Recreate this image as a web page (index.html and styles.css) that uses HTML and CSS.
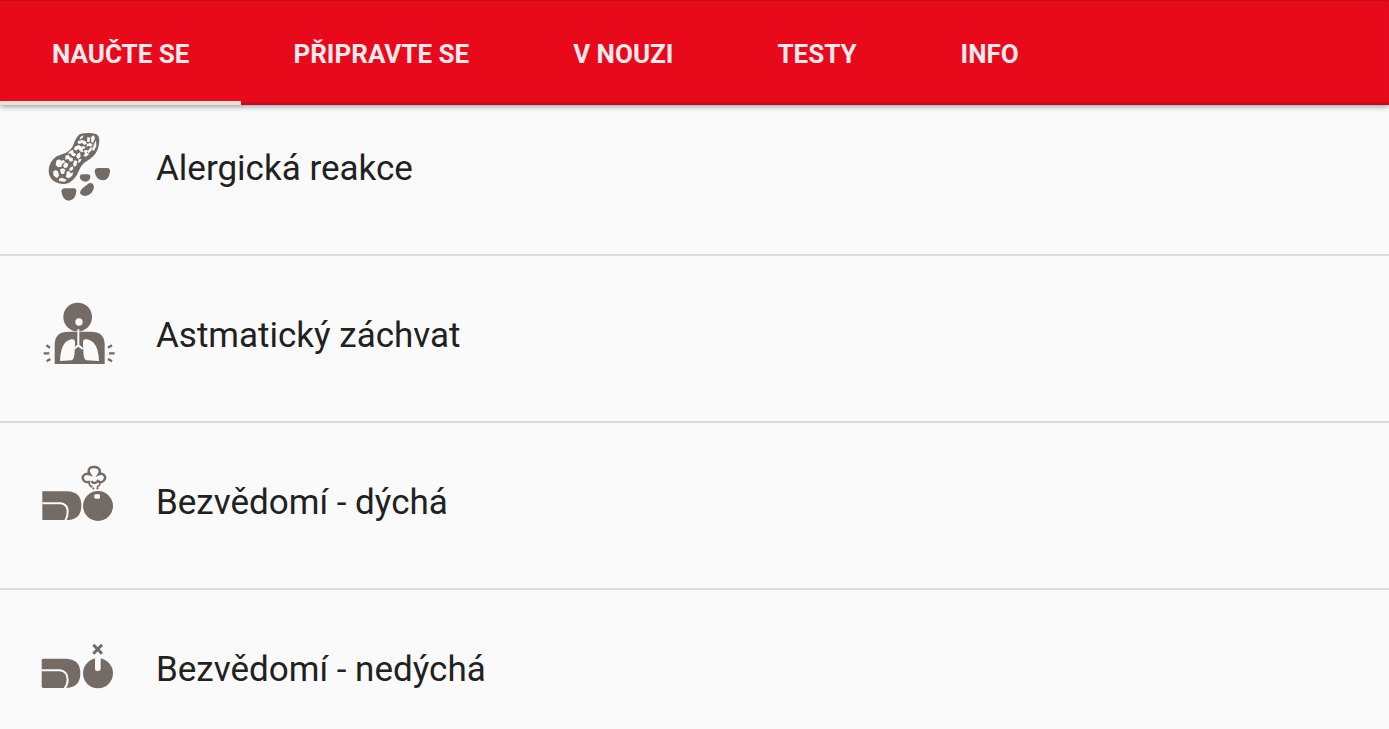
FILE: index.html
```html
<!DOCTYPE html>
<html lang="cs">
<head>
<meta charset="utf-8">
<meta name="viewport" content="width=device-width, initial-scale=1">
<title>První pomoc</title>
<link rel="stylesheet" href="styles.css">
</head>
<body>
<nav class="tabs">
  <a class="tab tab-active" href="#naucte" aria-current="page">NAUČTE SE</a>
  <a class="tab" href="#pripravte">PŘIPRAVTE SE</a>
  <a class="tab" href="#nouze">V NOUZI</a>
  <a class="tab" href="#testy">TESTY</a>
  <a class="tab" href="#info">INFO</a>
</nav>
<main>
  <ul class="topics">
    <li><a class="topic" href="#alergie">
      <svg class="icon" viewBox="24 27 240 240" aria-hidden="true">
        <path class="fill" d="M150 42Q175 36 198 42Q208 46 208 62Q207 90 191 107Q182 116 165 127Q153 136 146 154Q137 177 118 188Q98 197 77 187Q55 176 56 150Q58 124 80 109L108 98Q125 90 131 72Q138 51 150 42Z"/>
        <g class="cut">
          <path d="M151 51l10-5-3 7-9 6zM172 51l9 2-3 14-7-2zM184 50l7-4 4 8-6 15-6-4zM144 63l12-3 10 3 5 8-8 4-6-6-9 3-5-3zM171 72l9-3 8 4-5 8-6-4-8 3zM192 73l6-12 1 17-7 14-6-2zM180 84l8-3-5 12-8 7-3-5zM136 79l11-4 7 5 8-2 5 6-9 4 2 8-8-1-7-8-7 5-7-5zM164 90l10 1-4 7 8 4-10 8-8-3 6-7-5-4zM120 93l9-4 2 9 8 5-5 6-7-1-6-8-8 2zM142 102l8-5 2 13-7 7-7-7z"/>
          <path d="M106 107l10-3 3 7 9 3 1 9-9 2-5-8-9 2zM79 122l8-4 7 4 8-2 3 7-8 5-3 8-9 2-8-6zM106 127l9 5-3 10-8 3-5-8zM133 121l9 2-2 12-7 7-4-9zM146 118l9-1-5 10-6 1zM69 155l8-5 7 4 3 13-6 7-10-7zM90 148l9-3 7 4-4 13-9-1zM110 155l8-3 3 8 8-3-2 10-10 8-9-3zM87 176l9-3 15 7-8 5-16-2zM121 142l7-3 2 8-7 6-6-4z"/>
        </g>
        <path class="fill" d="M149 170Q150 163 158 163H173Q181 163 181 169Q180 185 166 185Q152 184 149 170ZM194 154Q195 144 205 144H232Q241 145 240 155Q237 181 217 181Q197 179 194 154ZM94 212Q96 205 105 205H132Q140 206 139 214Q137 241 116 242Q97 240 94 212ZM150 217Q151 210 159 203L177 190Q187 186 191 196Q194 207 184 219Q171 233 157 226Q149 223 150 217Z"/>
      </svg>
      <span class="label">Alergická reakce</span></a></li>
    <li><a class="topic" href="#astma">
      <svg class="icon" viewBox="24 18 240 240" aria-hidden="true">
        <circle class="fill" cx="143" cy="81" r="43"/>
        <path class="fill" d="M74 222V164Q74 125 116 125H182Q224 125 224 164V222Z"/>
        <circle class="cut" cx="147" cy="96" r="11"/>
        <path class="cut" d="M142 118H148V164L160 175L157 179L145 170L133 179L130 175L142 164ZM129 148Q136 150 135 160L134 182Q134 208 124 211L90 213Q91 175 105 158Q119 145 129 148ZM165 148Q158 150 159 160L160 182Q160 208 170 211L207 213Q206 175 191 158Q176 145 165 148Z"/>
        <path class="mark" d="M49 166L60 173M41 190H58M50 214L61 207M246 166L234 173M237 190H254M246 214L234 207"/>
      </svg>
      <span class="label">Astmatický záchvat</span></a></li>
    <li><a class="topic" href="#bezvedomi-dycha">
      <svg class="icon" viewBox="24 24 240 240" aria-hidden="true">
        <path class="fill" d="M37 109H112Q154 111 154 151Q154 193 114 195H37Z"/>
        <path class="seam" d="M37 145H91Q113 147 113 170Q113 184 106 196"/>
        <circle class="fill" cx="204" cy="153" r="45"/>
        <rect class="cut" x="193" y="118" width="17" height="13" rx="4"/>
        <path class="cloud" d="M180 80C161 86 153 68 162 60C168 54 175 56 180 58C170 43 180 35 193 36C207 35 214 46 206 58C220 52 231 65 222 76C217 83 208 82 203 78C198 86 188 86 184 78"/>
        <path class="puff" d="M177 83Q179 96 188 95M210 83Q209 96 200 95M188 99L192 102M200 102L205 98"/>
      </svg>
      <span class="label">Bezvědomí - dýchá</span></a></li>
    <li><a class="topic" href="#bezvedomi-nedycha">
      <svg class="icon" viewBox="24 0 240 240" aria-hidden="true">
        <path class="fill" d="M40 86H110Q151 88 151 130Q151 172 110 174H40Q35 174 35 169V91Q35 86 40 86Z"/>
        <path class="seam" d="M34 121H89Q113 124 113 149Q113 164 104 175"/>
        <circle class="fill" cx="204" cy="130" r="45"/>
        <path class="cut" d="M195 82H212V117Q212 123 204 123Q195 123 195 117Z"/>
        <path class="cross" d="M190 44L216 71M216 44L190 71"/>
      </svg>
      <span class="label">Bezvědomí - nedýchá</span></a></li>
  </ul>
</main>
</body>
</html>
```
FILE: styles.css
```css
* {
  box-sizing: border-box;
}

body {
  margin: 0;
  height: 100vh;
  overflow: hidden;
  background: #fafafa;
  color: #212121;
  font-family: Roboto, "Noto Sans", sans-serif;
}

a {
  color: inherit;
  text-decoration: none;
}

.tabs {
  position: relative;
  z-index: 1;
  display: flex;
  height: 105px;
  background: #e8091b;
  border-top: 1px solid #cf0a18;
  box-shadow: inset 0 -3px 2px -1px #b80d1c, 0 1px 6px rgba(0, 0, 0, 0.45);
}

.tab {
  display: flex;
  align-items: center;
  padding: 6px 52px 0;
  border-bottom: 4px solid transparent;
  color: #ffe9ec;
  font-size: 26px;
  font-weight: 700;
  white-space: nowrap;
}

.tab-active {
  border-bottom-color: #eedfdf;
}

/* The list is scrolled slightly under the tab bar. */
.topics {
  margin: -16px 0 0;
  padding: 0;
  list-style: none;
}

.topic {
  display: flex;
  align-items: center;
  gap: 38px;
  height: 167px;
  padding: 0 38px 5px;
  border-bottom: 2px solid #dcdcdc;
}

.icon {
  flex: none;
  width: 80px;
  height: 80px;
}

.label {
  font-size: 35px;
  line-height: 44px;
}

.fill {
  fill: #756b65;
}

.cut {
  fill: #fafafa;
}

.mark,
.seam,
.cloud,
.puff,
.cross {
  fill: none;
  stroke: #756b65;
}

.mark {
  stroke-width: 7;
}

.seam {
  stroke: #fafafa;
  stroke-width: 6;
}

.cloud {
  stroke-width: 7;
}

.puff {
  stroke-width: 5;
}

.cross {
  stroke-width: 9;
}
```
